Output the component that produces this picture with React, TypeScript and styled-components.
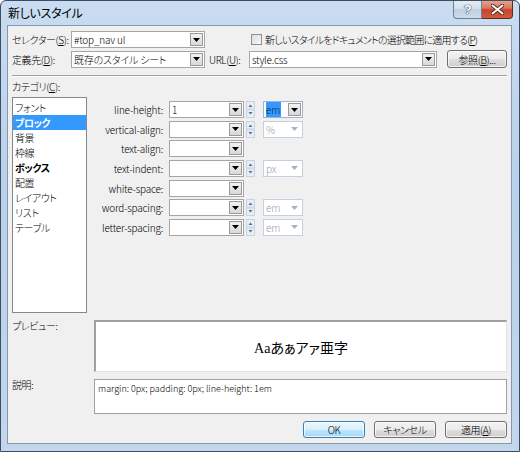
import styled, { createGlobalStyle } from 'styled-components';

const GlobalStyle = createGlobalStyle`
  html, body {
    margin: 0;
    padding: 0;
    background: #fff;
  }
  body {
    font-family: "Noto Sans CJK JP", "Liberation Sans", sans-serif;
    font-size: 10px;
    font-weight: 300;
    letter-spacing: -0.4px;
    font-feature-settings: "palt";
    color: #000;
  }
`;

const Arrow = ({ color = '#000' }: { color?: string }) => (
  <svg width="7" height="4" viewBox="0 0 7 4">
    <path d="M0 0h7L3.5 4z" fill={color} />
  </svg>
);

const Combo = ({
  width,
  value,
  disabled,
  selected,
}: {
  width: number;
  value?: string;
  disabled?: boolean;
  selected?: boolean;
}) => (
  <ComboBox $w={width} $disabled={disabled} $unit={disabled !== undefined}>
    <ComboText $disabled={disabled}>
      {selected ? <Selected>{value}</Selected> : value}
    </ComboText>
    <DropButton $disabled={disabled}>
      <Arrow color={disabled ? '#a9b3bf' : '#000'} />
    </DropButton>
  </ComboBox>
);

const Spinner = () => (
  <Spin>
    <svg width="9" height="17" viewBox="0 0 9 17">
      <rect x="0.5" y="0.5" width="8" height="7.5" fill="#e9eef5" stroke="#c9d3df" />
      <rect x="0.5" y="9" width="8" height="7.5" fill="#e9eef5" stroke="#c9d3df" />
      <path d="M2.5 6h4L4.5 3.5z" fill="#4d6fa8" />
      <path d="M2.5 11h4L4.5 13.5z" fill="#4d6fa8" />
    </svg>
  </Spin>
);

const categories = [
  { name: 'フォント' },
  { name: 'ブロック', active: true },
  { name: '背景' },
  { name: '枠線' },
  { name: 'ボックス', bold: true },
  { name: '配置' },
  { name: 'レイアウト' },
  { name: 'リスト' },
  { name: 'テーブル' },
];

const props: { label: string; value?: string; unit?: string; on?: boolean; spin: boolean }[] = [
  { label: 'line-height:', value: '1', unit: 'em', on: true, spin: true },
  { label: 'vertical-align:', unit: '%', spin: true },
  { label: 'text-align:', spin: false },
  { label: 'text-indent:', unit: 'px', spin: true },
  { label: 'white-space:', spin: false },
  { label: 'word-spacing:', unit: 'em', spin: true },
  { label: 'letter-spacing:', unit: 'em', spin: true },
];

export default function App() {
  return (
    <>
      <GlobalStyle />
      <Window>
        <TitleBar>
          <Title>新しいスタイル</Title>
          <Caption>
            <HelpBtn>?</HelpBtn>
            <CloseBtn>
              <svg width="13" height="11" viewBox="0 0 13 11">
                <path
                  d="M1.5 1.5l10 8M11.5 1.5l-10 8"
                  stroke="#4a2a22"
                  strokeWidth="3.6"
                  strokeLinecap="round"
                />
                <path
                  d="M1.5 1.5l10 8M11.5 1.5l-10 8"
                  stroke="#fff"
                  strokeWidth="2"
                  strokeLinecap="round"
                />
              </svg>
            </CloseBtn>
          </Caption>
        </TitleBar>
        <Client>
          <TopRow>
            <FieldLabel>
              セレクター(<u>S</u>):
            </FieldLabel>
            <Combo width={134} value="#top_nav ul" />
            <CheckWrap>
              <CheckBox />
              新しいスタイルをドキュメントの選択範囲に適用する(<u>P</u>)
            </CheckWrap>
          </TopRow>
          <TopRow $tall>
            <FieldLabel>
              定義先(<u>D</u>):
            </FieldLabel>
            <Combo width={134} value="既存のスタイル シート" />
            <UrlLabel>
              URL(<u>U</u>):
            </UrlLabel>
            <Combo width={188} value="style.css" />
            <PushButton $w={60} $push>
              参照(<u>B</u>)...
            </PushButton>
          </TopRow>
          <Separator />
          <SectionLabel>
            カテゴリ(<u>C</u>):
          </SectionLabel>
          <Main>
            <ListBox>
              {categories.map((c) => (
                <ListItem key={c.name} $active={c.active} $bold={c.bold || c.active}>
                  {c.name}
                </ListItem>
              ))}
            </ListBox>
            <PropGrid>
              {props.map((p) => (
                <PropRow key={p.label}>
                  <PropLabel>{p.label}</PropLabel>
                  <Combo width={75} value={p.value} />
                  {p.spin && <Spinner />}
                  {p.unit && (
                    <UnitSlot>
                      <Combo width={40} value={p.unit} disabled={!p.on} selected={p.on} />
                    </UnitSlot>
                  )}
                </PropRow>
              ))}
            </PropGrid>
          </Main>
          <BoxRow>
            <RowLabel>プレビュー:</RowLabel>
            <Preview>Aaあぁアァ亜字</Preview>
          </BoxRow>
          <BoxRow>
            <RowLabel>説明:</RowLabel>
            <Description>margin: 0px; padding: 0px; line-height: 1em</Description>
          </BoxRow>
          <ButtonBar>
            <PushButton $w={62} $default>
              OK
            </PushButton>
            <PushButton $w={62}>キャンセル</PushButton>
            <PushButton $w={62}>
              適用(<u>A</u>)
            </PushButton>
          </ButtonBar>
        </Client>
      </Window>
    </>
  );
}

const Window = styled.div`
  width: 520px;
  height: 452px;
  box-sizing: border-box;
  border: 1px solid #3d4e63;
  border-radius: 6px 6px 0 0;
  padding: 0 7px 7px 6px;
  background: linear-gradient(180deg, #c9dcf1 0%, #b9d1ea 40%, #c2d7ee 100%);
  display: flex;
  flex-direction: column;
  overflow: hidden;
`;

const TitleBar = styled.div`
  height: 24px;
  flex-shrink: 0;
  display: flex;
  align-items: flex-start;
  justify-content: space-between;
`;

const Title = styled.div`
  font-size: 12px;
  font-weight: 400;
  letter-spacing: -0.3px;
  line-height: 12px;
  padding: 6px 0 0 1px;
`;

const Caption = styled.div`
  display: flex;
  margin-top: -1px;
  margin-right: -1px;
`;

const HelpBtn = styled.div`
  width: 29px;
  height: 19px;
  box-sizing: border-box;
  border: 1px solid #6f7f91;
  border-top: none;
  border-radius: 0 0 0 4px;
  background: linear-gradient(180deg, #e6eef7 0%, #d3dfec 50%, #bfcee0 51%, #cddbeb 100%);
  color: #fff;
  text-shadow: 0 0 1px #3d4e63, 0 0 1px #3d4e63, 0 0 1px #3d4e63;
  font-family: "Liberation Sans", sans-serif;
  font-size: 13px;
  font-weight: bold;
  display: flex;
  align-items: center;
  justify-content: center;
`;

const CloseBtn = styled.div`
  width: 31px;
  height: 19px;
  box-sizing: border-box;
  border: 1px solid #5e2a20;
  border-top: none;
  border-left: none;
  border-radius: 0 0 4px 0;
  background: linear-gradient(180deg, #e8a897 0%, #d8765f 45%, #c7432a 55%, #d45b3e 100%);
  display: flex;
  align-items: center;
  justify-content: center;
`;

const Client = styled.div`
  flex: 1;
  min-height: 0;
  background: #f0f0f0;
  border: 1px solid #8598ad;
  padding: 5px 4px 0 4px;
  display: flex;
  flex-direction: column;
  overflow: hidden;
`;

const TopRow = styled.div<{ $tall?: boolean }>`
  display: flex;
  align-items: center;
  flex-shrink: 0;
  height: ${(p) => (p.$tall ? 18 : 17)}px;
  margin-bottom: 2px;
`;

const FieldLabel = styled.div`
  width: 59px;
  flex-shrink: 0;
  white-space: nowrap;
`;

const UrlLabel = styled.div`
  width: 44px;
  flex-shrink: 0;
  padding-left: 4px;
  box-sizing: border-box;
  white-space: nowrap;
`;

const CheckWrap = styled.div`
  display: flex;
  align-items: center;
  margin-left: 46px;
  white-space: nowrap;
  letter-spacing: -0.8px;
`;

const CheckBox = styled.span`
  width: 11px;
  height: 11px;
  box-sizing: border-box;
  border: 1px solid #8f8f8f;
  background: linear-gradient(135deg, #dcdcdc, #f8f8f8);
  margin-right: 3px;
`;

const ComboBox = styled.div<{ $w: number; $disabled?: boolean; $unit?: boolean }>`
  width: ${(p) => p.$w}px;
  height: 17px;
  box-sizing: border-box;
  border: 1px solid
    ${(p) => (p.$disabled ? '#c2d0e0' : p.$unit ? '#9db3cf' : '#a6a6a6')};
  background: #fff;
  display: flex;
  align-items: stretch;
  flex-shrink: 0;
`;

const ComboText = styled.div<{ $disabled?: boolean }>`
  flex: 1;
  padding-left: 2px;
  line-height: 15px;
  white-space: nowrap;
  overflow: hidden;
  letter-spacing: -0.2px;
  color: ${(p) => (p.$disabled ? '#9aa0a8' : '#000')};
`;

const Selected = styled.span`
  background: #3399ff;
  color: #10264a;
  padding-right: 1px;
`;

const DropButton = styled.div<{ $disabled?: boolean }>`
  width: 13px;
  margin: 1px;
  box-sizing: border-box;
  border: 1px solid ${(p) => (p.$disabled ? 'transparent' : '#9a9a9a')};
  background: ${(p) => (p.$disabled ? 'transparent' : 'linear-gradient(180deg, #f2f2f2, #d8d8d8)')};
  display: flex;
  align-items: center;
  justify-content: center;
`;

const Spin = styled.div`
  width: 9px;
  height: 17px;
  margin-left: 2px;
  display: flex;
`;

const PushButton = styled.div<{ $w: number; $default?: boolean; $push?: boolean }>`
  width: ${(p) => p.$w}px;
  height: 18px;
  flex-shrink: 0;
  box-sizing: border-box;
  border: 1px solid ${(p) => (p.$default ? '#3c7fb1' : '#707070')};
  border-radius: 3px;
  background: ${(p) =>
    p.$default
      ? 'linear-gradient(180deg, #eaf6fd 0%, #d9f0fc 50%, #bee6fd 51%, #a7d9f5 100%)'
      : 'linear-gradient(180deg, #f2f2f2 0%, #ebebeb 50%, #dddddd 51%, #cfcfcf 100%)'};
  box-shadow: inset 0 0 0 1px rgba(255, 255, 255, 0.7);
  display: flex;
  align-items: center;
  justify-content: center;
  white-space: nowrap;
  margin-left: ${(p) => (p.$push ? 'auto' : '0')};
`;

const Separator = styled.div`
  height: 0;
  flex-shrink: 0;
  border-top: 1px solid #a0a0a0;
  border-bottom: 1px solid #ffffff;
  margin-top: 5px;
`;

const SectionLabel = styled.div`
  margin-top: 4px;
  height: 12px;
  line-height: 12px;
  flex-shrink: 0;
`;

const Main = styled.div`
  display: flex;
  margin-top: 4px;
  height: 216px;
  flex-shrink: 0;
`;

const ListBox = styled.div`
  width: 75px;
  box-sizing: border-box;
  border: 1px solid #828790;
  background: #fff;
  padding: 2px 0 0 0;
`;

const ListItem = styled.div<{ $active?: boolean; $bold?: boolean }>`
  height: 15px;
  line-height: 15px;
  padding-left: 2px;
  font-weight: ${(p) => (p.$bold ? 'bold' : 'inherit')};
  background: ${(p) => (p.$active ? '#3399ff' : 'transparent')};
  color: ${(p) => (p.$active ? '#fff' : '#000')};
`;

const PropGrid = styled.div`
  display: flex;
  flex-direction: column;
  gap: 2.65px;
  margin: 4px 0 0 7px;
`;

const PropRow = styled.div`
  display: flex;
  align-items: center;
  height: 17px;
`;

const PropLabel = styled.div`
  width: 69px;
  text-align: right;
  margin-right: 6px;
  white-space: nowrap;
  letter-spacing: -0.2px;
`;

const UnitSlot = styled.div`
  margin-left: 8px;
`;

const BoxRow = styled.div`
  display: flex;
  margin-top: 7px;
  flex-shrink: 0;
`;

const RowLabel = styled.div`
  width: 82px;
  flex-shrink: 0;
  line-height: 12px;
  padding-top: 0;
`;

const Preview = styled.div`
  flex: 1;
  height: 52px;
  box-sizing: border-box;
  border-top: 2px solid #a0a0a0;
  border-left: 2px solid #a0a0a0;
  border-right: 1px solid #e3e3e3;
  border-bottom: 1px solid #e3e3e3;
  background: #fff;
  display: flex;
  align-items: center;
  justify-content: center;
  font-family: "Liberation Serif", "Noto Sans CJK JP", serif;
  font-size: 14px;
  font-weight: 400;
  letter-spacing: 0;
`;

const Description = styled.div`
  flex: 1;
  height: 35px;
  box-sizing: border-box;
  border: 1px solid #a0a0a0;
  background: #fff;
  padding: 3px 3px;
  font-size: 9px;
  letter-spacing: 0;
  line-height: 12px;
`;

const ButtonBar = styled.div`
  display: flex;
  justify-content: flex-end;
  gap: 9px;
  margin-top: 7px;
  flex-shrink: 0;
  & > div {
    height: 17px;
  }
`;
